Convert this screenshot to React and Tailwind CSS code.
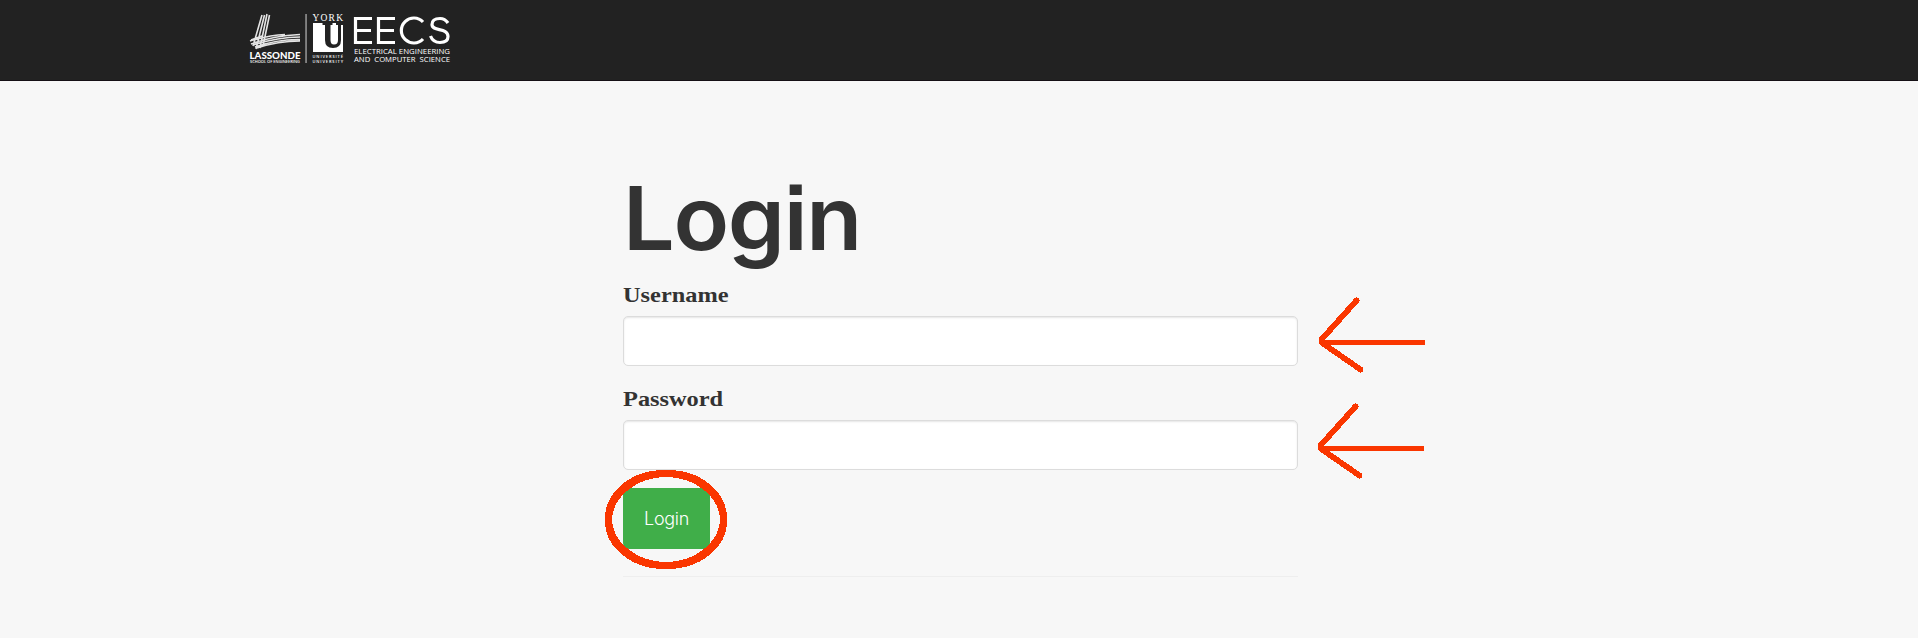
function Logo() {
  return (
    <svg className="overflow-visible" width="240" height="60" viewBox="246 10 240 60" fill="#fff" fontFamily='"Open Sans", sans-serif' role="img" aria-label="Lassonde York University EECS">
      <g stroke="#e4e4e4" strokeWidth="1.6" fill="none">
        <path d="M262 15L253 46M264.500 15L256 49M267 14L260 48M269.500 15L263 46M250 41Q270 35 285 34.500M251 44Q272 36 300 34.500M253 45Q278 37 300 37M255 47Q278 39 300 39.500M251 40L262 36M257 48Q278 41 300 41" />
      </g>
      <text x="249.500" y="58.500" fontSize="10" fontFamily="Lato, sans-serif" fontWeight="900" textLength="51" lengthAdjust="spacingAndGlyphs">LASSONDE</text>
      <text x="250" y="62.500" fontSize="3.600" fontWeight="600" textLength="50" lengthAdjust="spacingAndGlyphs">SCHOOL OF ENGINEERING</text>
      <rect x="305.300" y="14" width="1.500" height="49" fill="#999" />
      <text x="312.500" y="21" fontSize="9.500" fontFamily='"Liberation Serif", serif' textLength="30.500" lengthAdjust="spacing">YORK</text>
      <path d="M313 23H343V52H313Z" />
      <path d="M322.500 23H332.500V25H330.500V40Q330.500 44.500 334 44.500Q338 44.500 338 40V25H336V23H343V25H341V40Q341 48 333 48Q325 48 325 40V25H322.500Z" fill="#222" />
      <text x="312.500" y="58" fontSize="4" fontWeight="600" textLength="30.500" lengthAdjust="spacing">UNIVERSITÉ</text>
      <text x="312.500" y="62.500" fontSize="4" fontWeight="600" textLength="30.500" lengthAdjust="spacing">UNIVERSITY</text>
      <g fill="none" stroke="#fff" strokeWidth="3.200">
        <path d="M372 18.500H355.500V42.500H372M355.500 30.500H371M395 18.500H378.500V42.500H395M378.500 30.500H394" />
        <path d="M423 22A12.500 12.500 0 1 0 423 39M448 23Q445 18.500 440 18.500Q432 18.500 432 24.500C432 32 448 27 448 36.500Q448 42.500 440 42.500Q433 42.500 430.500 36" />
      </g>
      <text x="354" y="54" fontSize="7.500" fontWeight="500" textLength="96" lengthAdjust="spacingAndGlyphs">ELECTRICAL ENGINEERING</text>
      <text x="354" y="62" fontSize="7.500" fontWeight="500" textLength="96" lengthAdjust="spacingAndGlyphs" wordSpacing="2">AND COMPUTER SCIENCE</text>
    </svg>
  );
}

function Field({ label, type }) {
  return (
    <label className="block">
      <span className="block h-[36px] w-fit origin-left scale-x-[1.16] font-['Liberation_Serif',serif] text-[21px] leading-[31px] font-bold">{label}</span>
      <input type={type} className="block h-[50px] w-full rounded-[5px] border border-[#dcdcdc] bg-white px-4 shadow-[inset_0_1px_2px_rgba(0,0,0,0.1)] outline-none" />
    </label>
  );
}

function Arrow({ className }) {
  return (
    <svg className={className} width="112" height="80" viewBox="1315 295 112 80" fill="none" stroke="#fa3600" strokeWidth="5" shapeRendering="crispEdges" aria-hidden="true">
      <path d="M1425 342.500H1321" />
      <path d="M1356.500 300.500L1321.500 339.500V342.500L1360.500 369.500" strokeWidth="5.800" strokeLinejoin="round" strokeLinecap="round" />
    </svg>
  );
}

export default function App() {
  return (
    <div className="relative h-[638px] overflow-hidden bg-[#f7f7f7] text-[#333]">
      <header className="flex h-[81px] border-b border-[#151015] bg-[#222] pt-[10px] pl-[246px]">
        <Logo />
      </header>
      <main className="ml-[623px] w-[675px] pt-[89px]">
        <h1 className="h-[110px] origin-left scale-x-[1.04] font-['Inter',sans-serif] text-[88px] leading-[96px] font-[640] tracking-[-1.3px] [font-feature-settings:'ss07','ss08']">Login</h1>
        <form onSubmit={(e) => e.preventDefault()}>
          <div className="flex flex-col gap-[18px]">
            <Field label="Username" type="text" />
            <Field label="Password" type="password" />
          </div>
          <button className="mt-[18px] block h-[61px] w-[87px] rounded-[6px] bg-[#40ae49] font-['Inter',sans-serif] text-[18px] font-light tracking-[-0.3px] text-white [font-feature-settings:'ss07']">Login</button>
        </form>
        <hr className="mt-[27px] border-[#eee]" />
      </main>
      <Arrow className="absolute top-[295px] left-[1315px]" />
      <Arrow className="absolute top-[401px] left-[1314px]" />
      <svg className="pointer-events-none absolute top-[468px] left-[603px]" width="126" height="104" viewBox="603 468 126 104" aria-hidden="true">
        <g fill="none" stroke="#fa3600" strokeWidth="4" shapeRendering="crispEdges">
          <ellipse cx="664.500" cy="518" rx="57.500" ry="46" />
          <ellipse cx="667.500" cy="518" rx="57.500" ry="46" />
          <ellipse cx="664.500" cy="521" rx="57.500" ry="46" />
          <ellipse cx="667.500" cy="521" rx="57.500" ry="46" />
        </g>
      </svg>
    </div>
  );
}
